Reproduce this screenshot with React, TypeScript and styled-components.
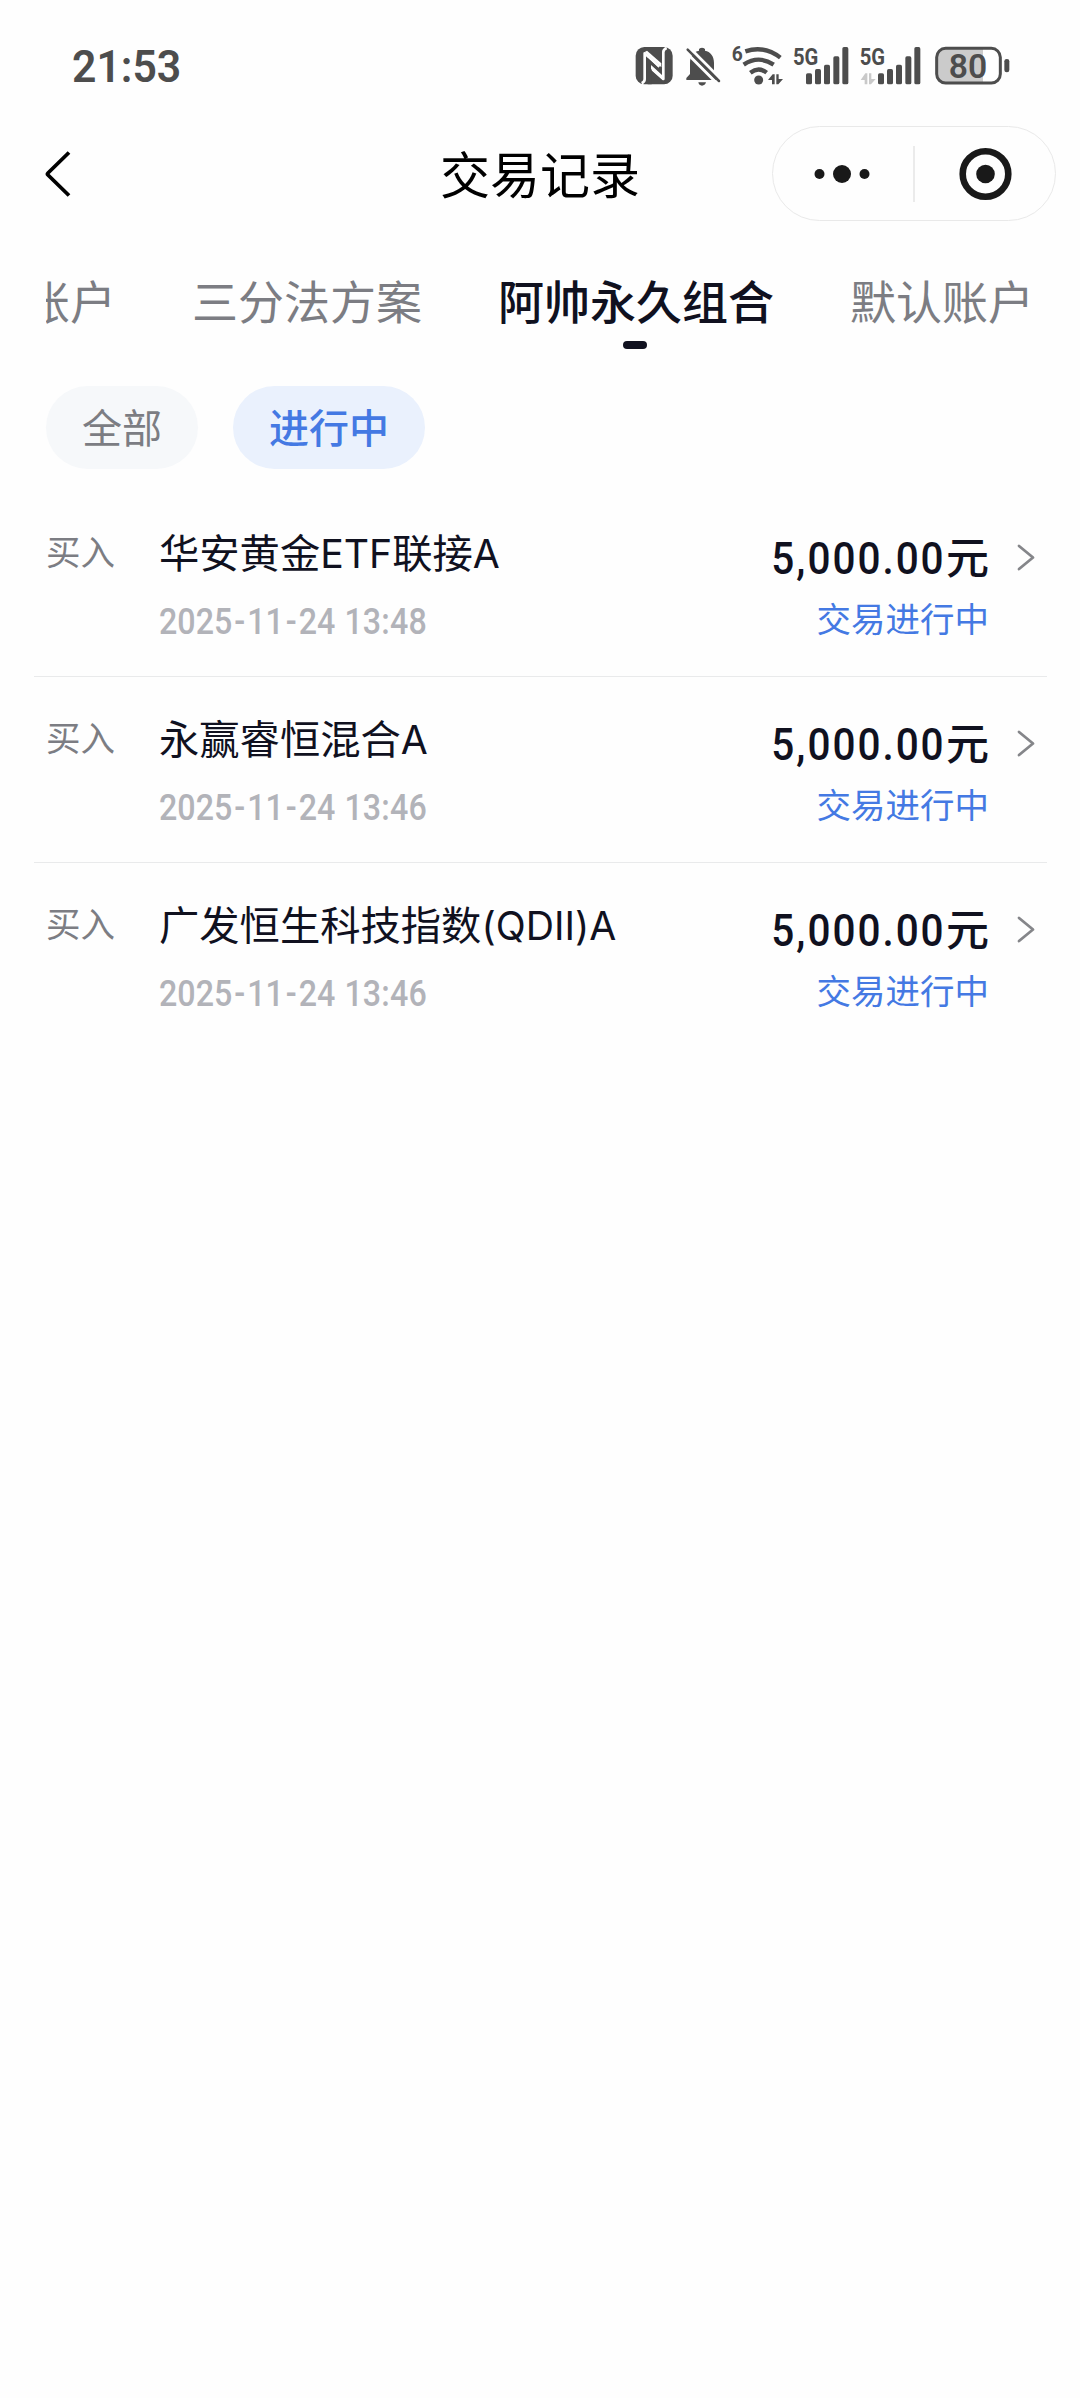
import React from "react";
import styled, { createGlobalStyle } from "styled-components";

const INK = "#4d4d4d";
const DARK = "#10111f";
const GRAY = "#7c7d83";
const BLUE = "#4479e3";

const GlobalStyle = createGlobalStyle`
  * { box-sizing: border-box; }
  body {
    margin: 0;
    background: #fefefe;
    font-family: "Noto Sans CJK SC", "Noto Sans", sans-serif;
  }
`;

const Screen = styled.div`
  width: 1080px;
  min-height: 2398px;
  display: flex;
  flex-direction: column;
  background: #fefefe;
`;

const StatusBar = styled.header`
  height: 126px;
  padding: 44px 70px 0 72px;
  display: flex;
  justify-content: space-between;
  align-items: flex-start;
`;

const Clock = styled.span`
  font: 600 44.5px/47px Roboto, sans-serif;
  color: ${INK};
  transform: scaleX(0.96);
  transform-origin: left;
`;

const StatusIcons = styled.div`
  display: flex;
  align-items: flex-start;
  svg { display: block; overflow: visible; }
`;

const Slot = styled.div<{ $gap: number }>`
  margin-left: ${(p) => p.$gap}px;
`;

const NavBar = styled.nav`
  height: 94px;
  padding: 0 24px 0 40px;
  display: grid;
  grid-template-columns: 284px 1fr 284px;
  column-gap: 74px;
  align-items: center;
`;

const BackButton = styled.button`
  width: 36px;
  height: 52px;
  margin-top: 1px;
  padding: 0;
  border: 0;
  background: none;
  svg { display: block; }
`;

const Title = styled.h1`
  margin: -4px 0 0 -16px;
  justify-self: center;
  font-size: 50px;
  line-height: 60px;
  font-weight: 400;
  color: #000;
  white-space: nowrap;
`;

const Capsule = styled.div`
  width: 284px;
  height: 95px;
  display: flex;
  align-items: center;
  border: 1.5px solid #e9e9e9;
  border-radius: 48px;
`;

const CapsuleHalf = styled.div`
  flex: 1;
  display: flex;
  justify-content: center;
`;

const CapsuleRule = styled.div`
  width: 2px;
  height: 56px;
  background: #ebebeb;
`;

const TabStrip = styled.div`
  margin: 45px 46px 0;
  height: 84px;
  display: flex;
  justify-content: flex-end;
  gap: 76px;
  overflow: hidden;
`;

const Tab = styled.div<{ $active?: boolean }>`
  flex: none;
  display: flex;
  flex-direction: column;
  align-items: center;
  font-size: 46px;
  line-height: 68px;
  font-weight: ${(p) => (p.$active ? 500 : 400)};
  color: ${(p) => (p.$active ? DARK : GRAY)};
`;

const TabMark = styled.i`
  width: 24px;
  height: 8px;
  margin: 8px 2px 0 0;
  border-radius: 4px;
  background: ${DARK};
`;

const Filters = styled.div`
  display: flex;
  gap: 35px;
  padding: 37px 46px 0;
`;

const Pill = styled.button<{ $active?: boolean }>`
  height: 83px;
  padding: 0 36px 4px;
  border: 0;
  border-radius: 42px;
  font-family: inherit;
  font-size: 40px;
  line-height: 76px;
  font-weight: ${(p) => (p.$active ? 500 : 400)};
  color: ${(p) => (p.$active ? BLUE : GRAY)};
  background: ${(p) => (p.$active ? "#eaf1fd" : "#f6f8fa")};
`;

const List = styled.main`
  margin: 22px 33px 0 34px;
`;

const Row = styled.article`
  height: 186px;
  display: flex;
  align-items: flex-start;
  padding: 32px 11px 0 12px;
  border-bottom: 1.5px solid #e9eaeb;
  &:last-child { border-bottom-color: transparent; }
`;

const Kind = styled.span`
  width: 113px;
  padding-top: 2px;
  font-size: 34.5px;
  line-height: 50px;
  color: ${GRAY};
`;

const Info = styled.div`
  flex: 1;
`;

const Name = styled.div`
  height: 56px;
  font-size: 40.3px;
  line-height: 56px;
  color: ${DARK};
`;

const Latin = styled.span`
  font-family: Inter, sans-serif;
  font-size: 39.2px;
`;

const DateLine = styled.div`
  display: flex;
  margin-top: 21px;
  font: 500 36px/44px Roboto, sans-serif;
  white-space: pre;
  color: #b2b3b9;
  transform: scaleX(0.895);
  transform-origin: left;
`;

const DateMark = styled.span<{ $w: number }>`
  width: ${(p) => p.$w}px;
  text-align: center;
`;

const Value = styled.div`
  display: flex;
  flex-direction: column;
  align-items: flex-end;
`;

const Amount = styled.div`
  display: flex;
  align-items: baseline;
  height: 63px;
  font-size: 43px;
  line-height: 65px;
  font-weight: 500;
  color: ${DARK};
`;

const Digits = styled.span`
  font-family: Roboto, sans-serif;
  font-size: 45px;
  letter-spacing: 2.2px;
  transform: scaleX(0.9);
  transform-origin: right;
`;

const State = styled.div`
  font-size: 34.5px;
  line-height: 50px;
  margin-top: 6px;
  color: ${BLUE};
`;

const Arrow = styled.svg`
  display: block;
  margin: 19px 0 0 27px;
`;

const NfcIcon = () => (
  <svg width="38" height="42" viewBox="48 42 114 126">
    <rect x="50" y="51" width="111" height="112" rx="26" fill={INK} />
    <g fill="none" stroke="#fefefe" strokeWidth="8" strokeLinejoin="round">
      <path d="M68 160Q77 156 77 148V70L121 110" />
      <path d="M143 54Q133 58 133 66V147L95 113" />
    </g>
    <path d="M77 66L127 112V100L84 62Z" fill="#fefefe" />
    <path d="M133 151L90 113V102L133 141Z" fill="#fefefe" />
    <path d="M86 84L124 119V128L98 104V163H86Z" fill={INK} />
    <path d="M96 105L133 139V150L96 116Z" fill="#fefefe" />
  </svg>
);

const MutedBellIcon = () => (
  <svg width="36" height="42" viewBox="198 42 108 126">
    <path
      d="M202 150V144L213 132V99C213 78 224 65 240 62V58Q241 53 249 53T258 58V62C274 65 285 78 285 99V132L297 144V150Z"
      fill={INK}
    />
    <path d="M238 157H261Q258 167 249 167T238 157Z" fill={INK} />
    <path d="M200 66L296 162" stroke="#fefefe" strokeWidth="9" />
    <path d="M208 50L308 150" stroke="#fefefe" strokeWidth="9" />
    <path d="M206 59L300 153" stroke={INK} strokeWidth="7.5" strokeLinecap="round" />
  </svg>
);

const WifiIcon = () => (
  <svg width="53" height="42" viewBox="336 42 159 126">
    <text x="338" y="93" fontFamily="Roboto" fontWeight="700" fontSize="62" textLength="33" lengthAdjust="spacingAndGlyphs" fill={INK}>
      6
    </text>
    <g fill="none" stroke={INK} strokeWidth="13">
      <path d="M379 64Q436 45 484 83" />
      <path d="M374 104Q419 74 464 104" />
      <path d="M394 128Q419 109 443 128" />
    </g>
    <circle cx="419" cy="150" r="13.500" fill={INK} />
    <path d="M447 150L461 133H467V163H459V150ZM472 133H479V147H492L478 163H472Z" fill={INK} />
  </svg>
);

const BARS = [
  [0, 130],
  [27, 117],
  [54, 104],
  [82, 79],
  [109, 51],
];

const Bars = ({ x }: { x: number }) => (
  <g fill={INK}>
    {BARS.map(([dx, top]) => (
      <rect key={dx} x={x + dx} y={top} width="18" height={163 - top} rx="5" />
    ))}
  </g>
);

const NetLabel = ({ x }: { x: number }) => (
  <text x={x} y="104" fontFamily="Roboto" fontWeight="700" fontSize="73" textLength="76" lengthAdjust="spacingAndGlyphs" fill={INK}>
    5G
  </text>
);

const Signal = ({ data }: { data?: boolean }) =>
  data ? (
    <svg width="61" height="42" viewBox="243 42 183 126">
      <NetLabel x={242} />
      <path d="M245 150L259 130H265V163H257V150ZM270 130H277V147H290L276 163H270Z" fill="#c9c9c9" />
      <Bars x={297} />
    </svg>
  ) : (
    <svg width="56" height="42" viewBox="42 42 168 126">
      <NetLabel x={42} />
      <Bars x={81} />
    </svg>
  );

const BatteryIcon = () => (
  <svg width="75" height="42" viewBox="468 42 225 126">
    <path d="M500 56H612V158H500Q475 158 475 132V82Q475 56 500 56Z" fill="#cbcbcb" />
    <rect x="473" y="55" width="191" height="104" rx="27" fill="none" stroke={INK} strokeWidth="9" />
    <rect x="676" y="87" width="15" height="40" rx="7" fill={INK} />
    <text x="509" y="143" fontFamily="Roboto" fontWeight="600" fontSize="101" textLength="116" lengthAdjust="spacing" fill={INK}>
      80
    </text>
  </svg>
);

const TABS = ["默认账户", "三分法方案", "阿帅永久组合", "默认账户"];
const ACTIVE_TAB = 2;

const RECORDS = [
  { name: "华安黄金ETF联接A", date: "2025-11-24 13:48" },
  { name: "永赢睿恒混合A", date: "2025-11-24 13:46" },
  { name: "广发恒生科技指数(QDII)A", date: "2025-11-24 13:46" },
];

const NameText = ({ value }: { value: string }) => (
  <Name>
    {value.split(/([ -~]+)/).map((part, i) => (i % 2 ? <Latin key={i}>{part}</Latin> : part))}
  </Name>
);

const MARK_WIDTH: Record<string, number> = { "-": 16.7, " ": 10.2, ":": 10 };

const DateText = ({ value }: { value: string }) => (
  <DateLine>
    {value.split(/([-: ])/).map((part, i) =>
      MARK_WIDTH[part] ? (
        <DateMark key={i} $w={MARK_WIDTH[part]}>
          {part}
        </DateMark>
      ) : (
        <span key={i}>{part}</span>
      )
    )}
  </DateLine>
);

export default function App() {
  return (
    <Screen>
      <GlobalStyle />
      <StatusBar>
        <Clock>21:53</Clock>
        <StatusIcons>
          <NfcIcon />
          <Slot $gap={12}><MutedBellIcon /></Slot>
          <Slot $gap={10}><WifiIcon /></Slot>
          <Slot $gap={9}><Signal /></Slot>
          <Slot $gap={11}><Signal data /></Slot>
          <Slot $gap={14}><BatteryIcon /></Slot>
        </StatusIcons>
      </StatusBar>

      <NavBar>
        <BackButton aria-label="返回">
          <svg width="36" height="52" viewBox="0 0 36 52">
            <path d="M29 4.500L8 25Q7 26 8 27L29 47.500" fill="none" stroke="#000" strokeWidth="3.8" />
          </svg>
        </BackButton>
        <Title>交易记录</Title>
        <Capsule>
          <CapsuleHalf>
            <svg width="60" height="24" viewBox="0 0 60 24" fill="#191919">
              <circle cx="6.500" cy="12" r="5" />
              <circle cx="29" cy="12" r="9" />
              <circle cx="51.500" cy="12" r="5" />
            </svg>
          </CapsuleHalf>
          <CapsuleRule />
          <CapsuleHalf>
            <svg width="56" height="56" viewBox="0 0 56 56">
              <circle cx="28.500" cy="28" r="22.800" fill="none" stroke="#191919" strokeWidth="6.600" />
              <circle cx="28.500" cy="28" r="9.300" fill="#191919" />
            </svg>
          </CapsuleHalf>
        </Capsule>
      </NavBar>

      <TabStrip>
        {TABS.map((label, i) => (
          <Tab key={i} $active={i === ACTIVE_TAB}>
            {label}
            {i === ACTIVE_TAB && <TabMark />}
          </Tab>
        ))}
      </TabStrip>

      <Filters>
        <Pill>全部</Pill>
        <Pill $active>进行中</Pill>
      </Filters>

      <List>
        {RECORDS.map((r) => (
          <Row key={r.name}>
            <Kind>买入</Kind>
            <Info>
              <NameText value={r.name} />
              <DateText value={r.date} />
            </Info>
            <Value>
              <Amount>
                <Digits>5,000.00</Digits>元
              </Amount>
              <State>交易进行中</State>
            </Value>
            <Arrow width="20" height="30" viewBox="0 0 20 30">
              <path d="M3 4L17 15.500L3 27" fill="none" stroke="#85868a" strokeWidth="2.800" strokeLinecap="round" strokeLinejoin="round" />
            </Arrow>
          </Row>
        ))}
      </List>
    </Screen>
  );
}
